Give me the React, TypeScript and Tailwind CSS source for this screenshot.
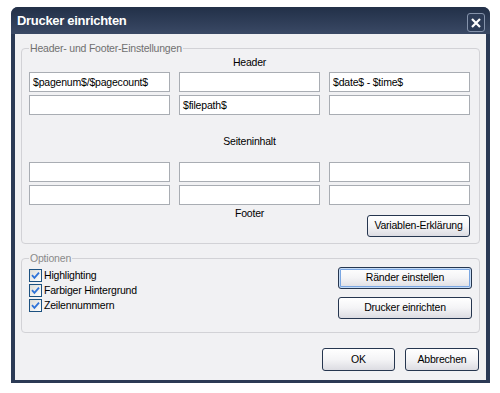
import clsx from "clsx";

function TextBox({ value = "" }: { value?: string }) {
  return (
    <div className="h-[20px] overflow-hidden whitespace-nowrap border border-[#a9adb3] bg-white px-[3px] leading-[18px] text-black">
      {value}
    </div>
  );
}

function XpButton({
  label,
  focused,
  className,
}: {
  label: string;
  focused?: boolean;
  className?: string;
}) {
  return (
    <button
      className={clsx(
        "rounded-[3px] border border-[#26364f] bg-linear-to-b from-white via-[#f4f4f6] to-[#dcdce2] text-black",
        focused && "shadow-[inset_0_0_0_1px_#c6dcf6,inset_0_0_0_2px_#7aa6e2]",
        className
      )}
    >
      {label}
    </button>
  );
}

function Check({ label }: { label: string }) {
  return (
    <label className="flex h-[13px] items-center gap-[2px]">
      <span className="flex h-[13px] w-[13px] items-center justify-center border border-[#1c5180] bg-linear-to-br from-[#dcdcd7] to-white">
        <svg width="9" height="9" viewBox="0 0 9 9">
          <path d="M1 4.2 L3.4 6.8 L8 1.6" stroke="#2f73d8" strokeWidth="1.8" fill="none" />
        </svg>
      </span>
      <span className="leading-[13px]">{label}</span>
    </label>
  );
}

export default function App() {
  return (
    <div className="h-[393px] w-[500px] bg-white font-[Liberation_Sans,Arial,sans-serif] text-[10.5px] tracking-[-0.2px] text-black">
      <div className="ml-[11px] pt-[7px]">
        <div className="flex h-[376px] w-[479px] flex-col rounded-t-[7px] bg-[#2b3a55]">
          {/* title bar */}
          <div className="flex h-[27px] items-start justify-between rounded-t-[7px] bg-linear-to-b from-[#223048] to-[#3a4965] pl-[6px] pr-[5px]">
            <span className="mt-[6px] text-[13px] font-bold leading-[16px] tracking-[-0.3px] text-white">
              Drucker einrichten
            </span>
            <button className="mt-[6px] flex h-[19px] w-[18px] items-center justify-center rounded-[3px] border border-[#8593ab] bg-[#2d3c57]">
              <svg width="10" height="10" viewBox="0 0 10 10">
                <path d="M1 1 L9 9 M9 1 L1 9" stroke="white" strokeWidth="2.2" />
              </svg>
            </button>
          </div>

          <div className="mx-[4px] mb-[3px] flex flex-1 flex-col bg-[#f1f1f3]">
            <fieldset className="mx-[6px] mt-[8px] rounded-[4px] border border-[#d2d2d6] px-[7px] pb-[6px]">
              <legend className="px-[1px] leading-[13px] text-[#707070]">
                Header- und Footer-Einstellungen
              </legend>
              <div className="ml-[150px] mt-[1px] w-[141px] text-center leading-[13px]">Header</div>
              <div className="mt-[3px] grid grid-cols-[141px_141px_141px] gap-x-[9px] gap-y-[3px]">
                <TextBox value="$pagenum$/$pagecount$" />
                <TextBox />
                <TextBox value="$date$ - $time$" />
                <TextBox />
                <TextBox value="$filepath$" />
                <TextBox />
              </div>
              <div className="ml-[150px] mt-[20px] w-[141px] text-center leading-[13px]">Seiteninhalt</div>
              <div className="mt-[14px] grid grid-cols-[141px_141px_141px] gap-x-[9px] gap-y-[3px]">
                <TextBox />
                <TextBox />
                <TextBox />
                <TextBox />
                <TextBox />
                <TextBox />
              </div>
              <div className="grid grid-cols-[141px_141px_141px] items-start gap-x-[9px]">
                <div className="col-start-2 mt-[2px] text-center leading-[13px]">Footer</div>
                <XpButton label="Variablen-Erklärung" className="mt-[10px] h-[22px] w-[103px] justify-self-end" />
              </div>
            </fieldset>

            <fieldset className="mx-[6px] mt-[8px] rounded-[4px] border border-[#d2d2d6] pb-[13px] pl-[7px] pr-[7px]">
              <legend className="px-[1px] leading-[13px] text-[#8a8a8a]">Optionen</legend>
              <div className="flex items-start justify-between">
                <div className="mt-[4px] flex flex-col gap-[2px]">
                  <Check label="Highlighting" />
                  <Check label="Farbiger Hintergrund" />
                  <Check label="Zeilennummern" />
                </div>
                <div className="mt-[2px] flex flex-col gap-[8px]">
                  <XpButton label="Ränder einstellen" focused className="h-[22px] w-[134px]" />
                  <XpButton label="Drucker einrichten" className="h-[22px] w-[134px]" />
                </div>
              </div>
            </fieldset>

            <div className="mr-[7px] mt-[15px] flex justify-end gap-[10px]">
              <XpButton label="OK" className="h-[23px] w-[73px]" />
              <XpButton label="Abbrechen" className="h-[23px] w-[74px]" />
            </div>
          </div>
        </div>
      </div>
    </div>
  );
}
